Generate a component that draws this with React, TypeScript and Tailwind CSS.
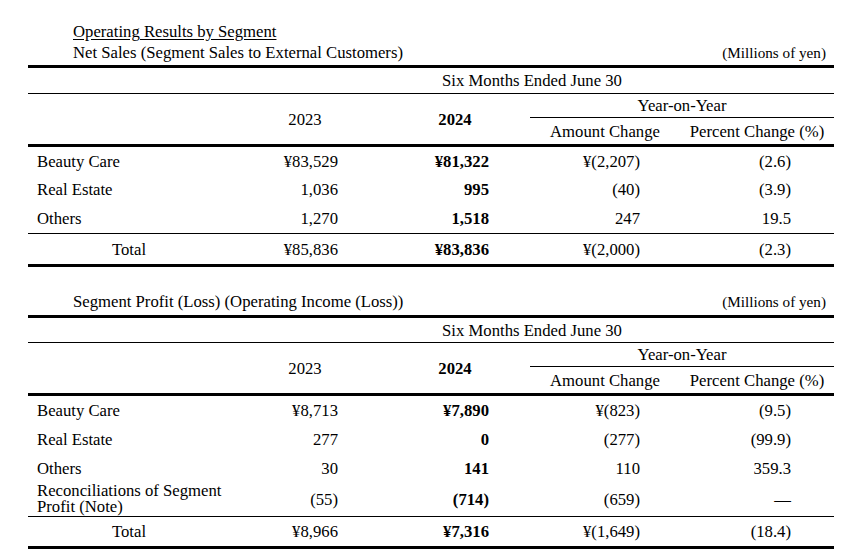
type Row = {
  label: string;
  v2023: string;
  v2024: string;
  amount: string;
  percent: string;
  h: string;
  wrap?: boolean;
};

const salesRows: Row[] = [
  { label: "Beauty Care", v2023: "¥83,529", v2024: "¥81,322", amount: "¥(2,207)", percent: "(2.6)", h: "h-[28px]" },
  { label: "Real Estate", v2023: "1,036", v2024: "995", amount: "(40)", percent: "(3.9)", h: "h-[29px]" },
  { label: "Others", v2023: "1,270", v2024: "1,518", amount: "247", percent: "19.5", h: "h-[29px]" },
];

const salesTotal: Row = { label: "Total", v2023: "¥85,836", v2024: "¥83,836", amount: "¥(2,000)", percent: "(2.3)", h: "h-[30px]" };

const profitRows: Row[] = [
  { label: "Beauty Care", v2023: "¥8,713", v2024: "¥7,890", amount: "¥(823)", percent: "(9.5)", h: "h-[29px]" },
  { label: "Real Estate", v2023: "277", v2024: "0", amount: "(277)", percent: "(99.9)", h: "h-[29px]" },
  { label: "Others", v2023: "30", v2024: "141", amount: "110", percent: "359.3", h: "h-[28px]" },
  { label: "Reconciliations of Segment Profit (Note)", v2023: "(55)", v2024: "(714)", amount: "(659)", percent: "—", h: "h-[34px]", wrap: true },
];

const profitTotal: Row = { label: "Total", v2023: "¥8,966", v2024: "¥7,316", amount: "¥(1,649)", percent: "(18.4)", h: "h-[29px]" };

const grid = "grid grid-cols-[202px_150px_150px_150px_154px]";

function Thick() {
  return <div className="h-[3px] bg-black" />;
}

function Thin() {
  return <div className="h-px bg-black" />;
}

function DataRow({ row, total }: { row: Row; total?: boolean }) {
  return (
    <div className={`${grid} ${row.h} items-center`}>
      {total ? (
        <div className="text-center">{row.label}</div>
      ) : (
        <div className={`pl-[9px] ${row.wrap ? "leading-[16px] pr-2" : ""}`}>{row.label}</div>
      )}
      <div className="text-right pr-[42px]">{row.v2023}</div>
      <div className="text-right pr-[41px] font-bold">{row.v2024}</div>
      <div className="text-right pr-[40px]">{row.amount}</div>
      <div className="text-right pr-[43px]">{row.percent}</div>
    </div>
  );
}

function Header({ six }: { six: string }) {
  return (
    <>
      <div className={`${grid} ${six} items-center`}>
        <div />
        <div className="col-span-4 text-center">Six Months Ended June 30</div>
      </div>
      <Thin />
      <div className={`${grid} h-[50px]`}>
        <div />
        <div className="flex items-center justify-center">2023</div>
        <div className="flex items-center justify-center font-bold">2024</div>
        <div className="col-span-2 flex flex-col">
          <div className="h-[23px] flex items-center justify-center">Year-on-Year</div>
          <Thin />
          <div className="grid grid-cols-[150px_154px] flex-1 items-center">
            <div className="text-center">Amount Change</div>
            <div className="text-center">Percent Change (%)</div>
          </div>
        </div>
      </div>
    </>
  );
}

export default function App() {
  return (
    <div className="w-[865px] h-[552px] overflow-hidden bg-white text-black text-[16.7px] leading-[21px] font-['Liberation_Serif',_'Times_New_Roman',_serif]">
      <div className="ml-[28px] w-[806px]">
        {/* Net sales */}
        <div className="pt-[21px] pl-[45px]">
          <span className="underline underline-offset-2">Operating Results by Segment</span>
        </div>
        <div className="flex justify-between items-baseline pl-[45px] pr-[8px]">
          <span>Net Sales (Segment Sales to External Customers)</span>
          <span className="text-[15.2px]">(Millions of yen)</span>
        </div>
        <div className="mt-[2px]">
          <Thick />
          <Header six="h-[25px]" />
          <Thick />
          {salesRows.map((r) => (
            <DataRow key={r.label} row={r} />
          ))}
          <Thin />
          <DataRow row={salesTotal} total />
          <Thick />
        </div>

        {/* Segment profit */}
        <div className="mt-[24px] flex justify-between items-baseline pl-[45px] pr-[8px]">
          <span>Segment Profit (Loss) (Operating Income (Loss))</span>
          <span className="text-[15.2px]">(Millions of yen)</span>
        </div>
        <div className="mt-[3px]">
          <Thick />
          <Header six="h-[24px]" />
          <Thick />
          {profitRows.map((r) => (
            <DataRow key={r.label} row={r} />
          ))}
          <Thin />
          <DataRow row={profitTotal} total />
          <Thick />
        </div>
        <div className="mt-[2px] leading-[18px]">
          Note: Reconciliations of segment profit (loss) are the elimination of inter-segment transactions and corporate expenses.
        </div>
      </div>
    </div>
  );
}
